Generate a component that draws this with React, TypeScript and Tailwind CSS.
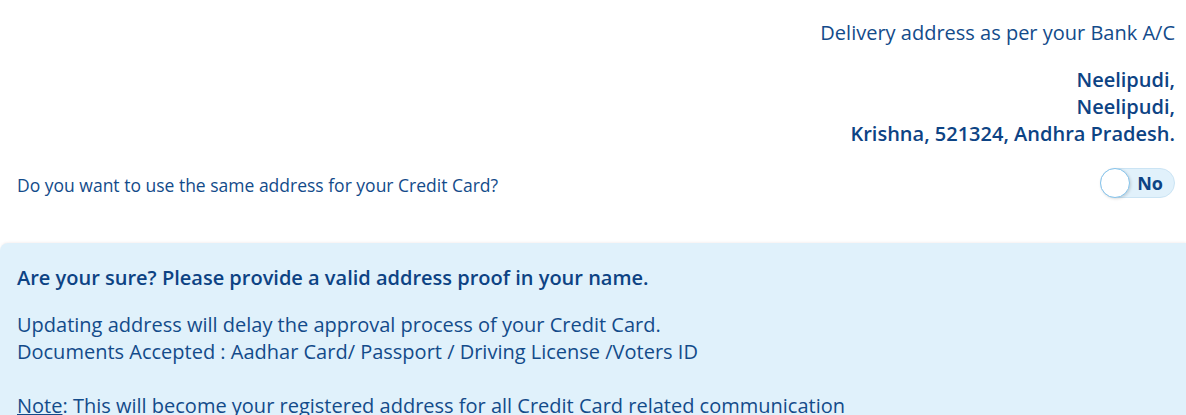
export default function App() {
  return (
    <div className="min-h-[415px] bg-white font-['Open_Sans',sans-serif] text-[#134b8a] overflow-hidden">
      <div className="pl-[17px] pr-[11px] pt-[19px]">
        <p className="text-right text-[20px] leading-[27px]">Delivery address as per your Bank A/C</p>
        <div className="mt-[20px] text-right text-[20px] leading-[27px] font-semibold text-[#0d4384]">
          <p>Neelipudi,</p>
          <p>Neelipudi,</p>
          <p>Krishna, 521324, Andhra Pradesh.</p>
        </div>
        <div className="mt-[21px] flex items-center justify-between h-[30px]">
          <p className="text-[17.5px] leading-[24px] pt-[3px]">Do you want to use the same address for your Credit Card?</p>
          <button className="relative w-[75px] h-[30px] rounded-full bg-[#e1f1fb] border border-[#cbe4f4] flex items-center justify-end pr-[11px]">
            <span className="absolute left-[-1px] top-[-1px] w-[30px] h-[30px] rounded-full bg-white border border-[#86c4ec] shadow-[1px_1px_3px_rgba(0,0,0,0.15)]" />
            <span className="text-[18px] font-bold text-[#0d4384] leading-none">No</span>
          </button>
        </div>
      </div>
      <div className="mt-[45px] rounded-tl-[8px] bg-[#e0f1fb] pl-[17px] pr-[11px] pt-[21px] pb-[20px] shadow-[0_-1px_2px_rgba(200,170,170,0.15)]">
        <p className="text-[20px] leading-[27px] font-semibold text-[#0d4384]">Are your sure? Please provide a valid address proof in your name.</p>
        <div className="mt-[20px] text-[20px] leading-[27px]">
          <p>Updating address will delay the approval process of your Credit Card.</p>
          <p>Documents Accepted : Aadhar Card/ Passport / Driving License /Voters ID</p>
          <p>&nbsp;</p>
          <p><span className="underline">Note</span>: This will become your registered address for all Credit Card related communication</p>
        </div>
      </div>
    </div>
  );
}
